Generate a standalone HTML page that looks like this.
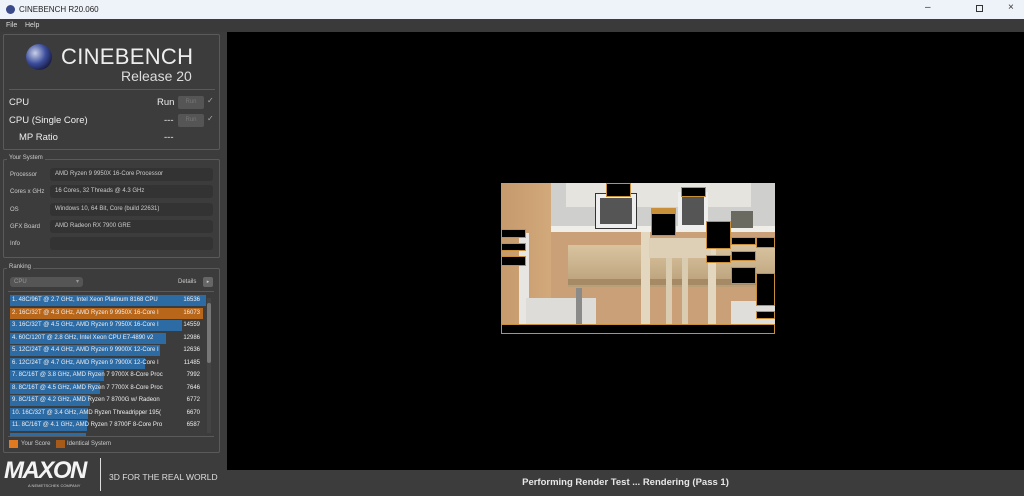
<!DOCTYPE html>
<html><head><meta charset="utf-8"><style>
*{margin:0;padding:0;box-sizing:border-box}
body{width:1024px;height:496px;overflow:hidden;background:#3c3c3c;font-family:"Liberation Sans","DejaVu Sans",sans-serif;position:relative;color:#ddd}
.abs{position:absolute}
#title{left:0;top:0;width:1024px;height:19px;background:#eef2f9;color:#222;font-size:8px}
#menu{left:0;top:19px;width:1024px;height:13px;background:#3a3a3a;font-size:7px;color:#ddd}
#render{left:227px;top:32px;width:797px;height:438px;background:#000}
#status{left:227px;top:470px;width:797px;height:26px;background:#3c3c3c;color:#e8e8e8;font-size:9.5px;font-weight:bold;text-align:center;line-height:25px}
.box{border:1px solid #5a5a5a;border-radius:2px}
.lbl{font-size:6px;color:#ccc}
.fld{background:#333;border-radius:3px;height:13px;font-size:6px;color:#ccc;line-height:13px;padding-left:5px}
.row{height:11px;font-size:6px;line-height:11px;color:#eee;white-space:nowrap}
.bar{position:absolute;left:0;top:0;height:11px;background:#2d6ba5}
.t{position:relative;padding-left:2px}
.s{position:absolute;right:6px;top:0}
.tile{position:absolute;background:#000;border:1px solid #c8903a}
</style></head><body>
<div id="title" class="abs">
 <div class="abs" style="left:6px;top:5px;width:9px;height:9px;border-radius:50%;background:#3a4a8a"></div>
 <div class="abs" style="left:19px;top:5px">CINEBENCH R20.060</div>
 <div class="abs" style="left:925px;top:2px;font-size:10px;color:#333">–</div>
 <div class="abs" style="left:976px;top:5px;width:7px;height:7px;border:1px solid #333"></div>
 <div class="abs" style="left:1008px;top:2px;font-size:10px;color:#333">×</div>
</div>
<div id="menu" class="abs"><span class="abs" style="left:6px;top:3px">File</span><span class="abs" style="left:25px;top:3px">Help</span></div>

<div class="abs box" style="left:3px;top:34px;width:217px;height:116px"></div>
<div class="abs" style="left:26px;top:44px;width:26px;height:26px;border-radius:50%;background:radial-gradient(circle at 35% 35%,#c8d0e8 0,#3b4c9a 45%,#15183a 80%)"></div>
<div class="abs" style="left:61px;top:44px;font-size:22px;color:#eee;letter-spacing:0.3px">CINEBENCH</div>
<div class="abs" style="left:121px;top:68px;font-size:14px;color:#ddd">Release 20</div>
<div class="abs" style="left:9px;top:89px;width:206px;height:1px;background:#5a5a5a"></div>
<div class="abs" style="left:9px;top:97px;font-size:9.5px;color:#eee">CPU</div>
<div class="abs" style="left:157px;top:97px;font-size:9.5px;color:#eee">Run</div>
<div class="abs" style="left:178px;top:96px;width:26px;height:13px;background:#555;border-radius:2px;font-size:6px;color:#777;text-align:center;line-height:13px">Run</div>
<div class="abs" style="left:207px;top:96px;font-size:8px;color:#aaa">✓</div>
<div class="abs" style="left:9px;top:115px;font-size:9.5px;color:#eee">CPU (Single Core)</div>
<div class="abs" style="left:164px;top:115px;font-size:9.5px;color:#eee">---</div>
<div class="abs" style="left:178px;top:114px;width:26px;height:13px;background:#555;border-radius:2px;font-size:6px;color:#777;text-align:center;line-height:13px">Run</div>
<div class="abs" style="left:207px;top:114px;font-size:8px;color:#aaa">✓</div>
<div class="abs" style="left:19px;top:132px;font-size:9.5px;color:#eee">MP Ratio</div>
<div class="abs" style="left:164px;top:132px;font-size:9.5px;color:#eee">---</div>

<div class="abs box" style="left:3px;top:159px;width:217px;height:99px"></div>
<div class="abs lbl" style="left:7px;top:155px;background:#3c3c3c;padding:0 2px">Your System</div>
<div class="abs lbl" style="left:10px;top:172px">Processor</div>
<div class="abs fld" style="left:50px;top:168px;width:163px">AMD Ryzen 9 9950X 16-Core Processor</div>
<div class="abs lbl" style="left:10px;top:189px">Cores x GHz</div>
<div class="abs fld" style="left:50px;top:185px;width:163px">16 Cores, 32 Threads @ 4.3 GHz</div>
<div class="abs lbl" style="left:10px;top:207px">OS</div>
<div class="abs fld" style="left:50px;top:203px;width:163px">Windows 10, 64 Bit, Core (build 22631)</div>
<div class="abs lbl" style="left:10px;top:224px">GFX Board</div>
<div class="abs fld" style="left:50px;top:220px;width:163px">AMD Radeon RX 7900 GRE</div>
<div class="abs lbl" style="left:10px;top:241px">Info</div>
<div class="abs fld" style="left:50px;top:237px;width:163px"></div>

<div class="abs box" style="left:3px;top:268px;width:217px;height:185px"></div>
<div class="abs lbl" style="left:7px;top:264px;background:#3c3c3c;padding:0 2px">Ranking</div>
<div class="abs" style="left:10px;top:277px;width:73px;height:10px;background:#555;border-radius:3px;font-size:6px;color:#999;line-height:10px;padding-left:4px">CPU<span style="position:absolute;right:4px">▾</span></div>
<div class="abs lbl" style="left:178px;top:279px">Details</div>
<div class="abs" style="left:203px;top:277px;width:10px;height:10px;background:#666;border-radius:2px;font-size:5px;color:#ccc;text-align:center;line-height:10px">▸</div>
<div class="abs" style="left:8px;top:291px;width:206px;height:1px;background:#5a5a5a"></div>
<div class="abs" style="left:10px;top:295px;width:196px">
 <div class="row" style="position:relative;margin-bottom:1.5px"><div class="bar" style="width:196px"></div><span class="t">1. 48C/96T @ 2.7 GHz, Intel Xeon Platinum 8168 CPU</span><span class="s">16536</span></div>
 <div class="row" style="position:relative;margin-bottom:1.5px"><div class="bar" style="width:193px;background:#b8661a"></div><span class="t">2. 16C/32T @ 4.3 GHz, AMD Ryzen 9 9950X 16-Core I</span><span class="s">16073</span></div>
 <div class="row" style="position:relative;margin-bottom:1.5px"><div class="bar" style="width:172px"></div><span class="t">3. 16C/32T @ 4.5 GHz, AMD Ryzen 9 7950X 16-Core I</span><span class="s">14559</span></div>
 <div class="row" style="position:relative;margin-bottom:1.5px"><div class="bar" style="width:156px"></div><span class="t">4. 60C/120T @ 2.8 GHz, Intel Xeon CPU E7-4890 v2</span><span class="s">12986</span></div>
 <div class="row" style="position:relative;margin-bottom:1.5px"><div class="bar" style="width:150px"></div><span class="t">5. 12C/24T @ 4.4 GHz, AMD Ryzen 9 9900X 12-Core I</span><span class="s">12636</span></div>
 <div class="row" style="position:relative;margin-bottom:1.5px"><div class="bar" style="width:135px"></div><span class="t">6. 12C/24T @ 4.7 GHz, AMD Ryzen 9 7900X 12-Core I</span><span class="s">11485</span></div>
 <div class="row" style="position:relative;margin-bottom:1.5px"><div class="bar" style="width:94px"></div><span class="t">7. 8C/16T @ 3.8 GHz, AMD Ryzen 7 9700X 8-Core Proc</span><span class="s">7992</span></div>
 <div class="row" style="position:relative;margin-bottom:1.5px"><div class="bar" style="width:90px"></div><span class="t">8. 8C/16T @ 4.5 GHz, AMD Ryzen 7 7700X 8-Core Proc</span><span class="s">7646</span></div>
 <div class="row" style="position:relative;margin-bottom:1.5px"><div class="bar" style="width:80px"></div><span class="t">9. 8C/16T @ 4.2 GHz, AMD Ryzen 7 8700G w/ Radeon</span><span class="s">6772</span></div>
 <div class="row" style="position:relative;margin-bottom:1.5px"><div class="bar" style="width:78px"></div><span class="t">10. 16C/32T @ 3.4 GHz, AMD Ryzen Threadripper 195(</span><span class="s">6670</span></div>
 <div class="row" style="position:relative;margin-bottom:1.5px"><div class="bar" style="width:77px"></div><span class="t">11. 8C/16T @ 4.1 GHz, AMD Ryzen 7 8700F 8-Core Pro</span><span class="s">6587</span></div>
 <div class="row" style="position:relative;height:4px"><div class="bar" style="width:76px;height:4px"></div></div>
</div>
<div class="abs" style="left:207px;top:298px;width:4px;height:135px;background:#444"></div>
<div class="abs" style="left:207px;top:303px;width:4px;height:60px;background:#777;border-radius:2px"></div>
<div class="abs" style="left:8px;top:436px;width:206px;height:1px;background:#5a5a5a"></div>
<div class="abs" style="left:9px;top:440px;width:9px;height:8px;background:#e07a20"></div>
<div class="abs lbl" style="left:21px;top:441px">Your Score</div>
<div class="abs" style="left:56px;top:440px;width:9px;height:8px;background:#a85a18"></div>
<div class="abs lbl" style="left:67px;top:441px">Identical System</div>

<div class="abs" style="left:4px;top:457px;font-size:24px;font-weight:bold;font-style:italic;color:#f4f4f4;letter-spacing:-1.5px">MAXON</div>
<div class="abs" style="left:28px;top:483px;font-size:4px;color:#ccc">A NEMETSCHEK COMPANY</div>
<div class="abs" style="left:100px;top:458px;width:1px;height:33px;background:#ddd"></div>
<div class="abs" style="left:109px;top:472px;font-size:8.5px;color:#ddd;white-space:nowrap">3D FOR THE REAL WORLD</div>

<div id="render" class="abs"></div>
<div id="status" class="abs">Performing Render Test ... Rendering (Pass 1)</div>

<div class="abs" style="left:501px;top:183px;width:274px;height:151px;overflow:hidden;background:#c9a077">
 <div class="abs" style="left:50px;top:0;width:224px;height:47px;background:#cfcfcd"></div>
 <div class="abs" style="left:65px;top:0;width:185px;height:24px;background:#e6e4df"></div>
 <div class="abs" style="left:50px;top:43px;width:224px;height:6px;background:#f0eee8"></div>
 <div class="abs" style="left:95px;top:11px;width:40px;height:34px;background:#555;border:4px solid #eee;outline:1px solid #333"></div>
 <div class="abs" style="left:177px;top:9px;width:30px;height:37px;background:#555;border:4px solid #eee"></div>
 <div class="abs" style="left:230px;top:28px;width:22px;height:17px;background:#6a6a60"></div>
 <div class="abs" style="left:0;top:0;width:50px;height:151px;background:linear-gradient(90deg,#c59a6c,#d2a97b)"></div>
 <div class="abs" style="left:67px;top:62px;width:207px;height:42px;background:linear-gradient(180deg,#d9c4a0,#b99f78)"></div>
 <div class="abs" style="left:67px;top:96px;width:207px;height:6px;background:#a68a65"></div>
 <div class="abs" style="left:140px;top:49px;width:9px;height:100px;background:#e3d7c0"></div>
 <div class="abs" style="left:207px;top:58px;width:8px;height:90px;background:#e3d7c0"></div>
 <div class="abs" style="left:148px;top:55px;width:62px;height:20px;background:#ddd0b6"></div>
 <div class="abs" style="left:165px;top:75px;width:6px;height:75px;background:#d9ccb1"></div>
 <div class="abs" style="left:181px;top:75px;width:6px;height:75px;background:#d9ccb1"></div>
 <div class="abs" style="left:18px;top:50px;width:10px;height:101px;background:#e8e6e2"></div>
 <div class="abs" style="left:25px;top:115px;width:70px;height:26px;background:#dedcd8"></div>
 <div class="abs" style="left:75px;top:105px;width:6px;height:45px;background:#8a8a88"></div>
 <div class="abs" style="left:230px;top:118px;width:44px;height:25px;background:#e0dedb"></div>
 <div class="tile" style="left:105px;top:0;width:25px;height:14px"></div>
 <div class="tile" style="left:180px;top:4px;width:25px;height:10px"></div>
 <div class="tile" style="left:150px;top:25px;width:25px;height:28px;border-top-width:6px;border-top-color:#c8903a"></div>
 <div class="tile" style="left:205px;top:38px;width:25px;height:28px"></div>
 <div class="tile" style="left:205px;top:72px;width:25px;height:8px"></div>
 <div class="tile" style="left:0;top:46px;width:25px;height:9px"></div>
 <div class="tile" style="left:0;top:60px;width:25px;height:8px"></div>
 <div class="tile" style="left:0;top:73px;width:25px;height:10px"></div>
 <div class="tile" style="left:230px;top:54px;width:25px;height:8px"></div>
 <div class="tile" style="left:255px;top:54px;width:19px;height:11px"></div>
 <div class="tile" style="left:230px;top:68px;width:25px;height:10px"></div>
 <div class="tile" style="left:230px;top:84px;width:25px;height:17px"></div>
 <div class="tile" style="left:255px;top:90px;width:19px;height:33px"></div>
 <div class="tile" style="left:255px;top:128px;width:19px;height:8px"></div>
 <div class="tile" style="left:0;top:141px;width:274px;height:10px"></div>
</div>
</body></html>
